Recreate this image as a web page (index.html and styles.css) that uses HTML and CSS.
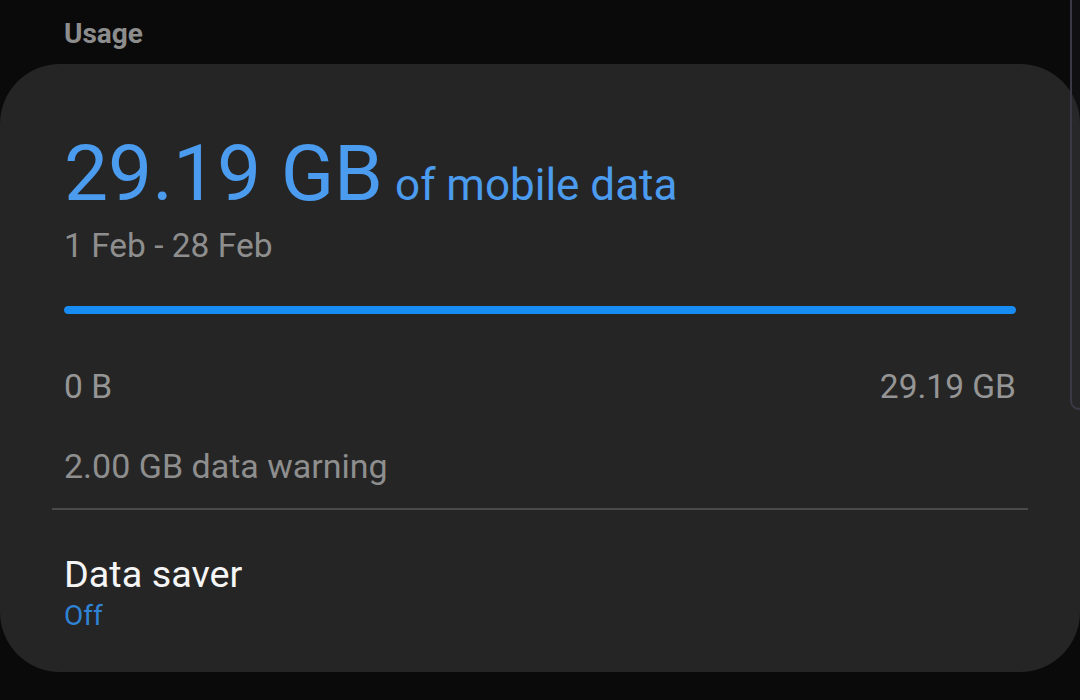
FILE: index.html
```html
<!DOCTYPE html>
<html lang="en">
<head>
<meta charset="utf-8">
<title>Usage</title>
<link rel="stylesheet" href="styles.css">
</head>
<body>
<div class="screen">
  <h2 class="section-title">Usage</h2>
  <section class="card">
    <div class="total">
      <span class="total-value">29.19 GB</span>
      <span class="total-label">of mobile data</span>
    </div>
    <div class="period">1 Feb - 28 Feb</div>
    <div class="bar"><div class="bar-fill" style="width:100%"></div></div>
    <div class="scale">
      <span>0 B</span>
      <span>29.19 GB</span>
    </div>
    <div class="warning">2.00 GB data warning</div>
    <div class="divider"></div>
    <div class="setting">
      <div class="setting-title">Data saver</div>
      <div class="setting-value">Off</div>
    </div>
  </section>
  <div class="scroll-thumb"></div>
</div>
</body>
</html>
```

FILE: styles.css
```css
html, body {
  margin: 0;
  padding: 0;
  background: #0a0a0a;
}
body {
  width: 1080px;
  height: 700px;
  overflow: hidden;
  font-family: Roboto, "Noto Sans", "Liberation Sans", sans-serif;
}
.screen {
  position: relative;
  width: 1080px;
  height: 700px;
}
.section-title {
  margin: 0;
  padding: 16px 0 0 64px;
  height: 50px;
  box-sizing: border-box;
  font-size: 28px;
  line-height: 36px;
  font-weight: 700;
  color: #8d8d8d;
}
.card {
  background: #252525;
  border-radius: 60px;
  height: 608px;
  box-sizing: border-box;
  padding: 69px 64px 0 64px;
  margin-top: 14px;
  display: flex;
  flex-direction: column;
}
.total {
  display: flex;
  align-items: baseline;
  gap: 12px;
  height: 80px;
  line-height: 80px;
  color: #4b9bee;
}
.total-value {
  font-size: 78.5px;
}
.total-label {
  font-size: 44px;
}
.period {
  margin-top: 13px;
  font-size: 33.5px;
  line-height: 40px;
  color: #8e8e8e;
}
.bar {
  margin-top: 40px;
  height: 8px;
  border-radius: 4px;
  background: #3a3a3a;
  overflow: hidden;
}
.bar-fill {
  height: 100%;
  background: #178cf3;
  border-radius: 4px;
}
.scale {
  margin-top: 53px;
  display: flex;
  justify-content: space-between;
  font-size: 33.5px;
  line-height: 40px;
  color: #959595;
}
.warning {
  margin-top: 39px;
  font-size: 34px;
  line-height: 40px;
  color: #8e8e8e;
}
.divider {
  margin: 22px -12px 0 -12px;
  height: 2px;
  background: #4a4a4a;
}
.setting {
  margin-top: 43px;
  display: flex;
  flex-direction: column;
  gap: 5px;
}
.setting-title {
  font-size: 37.8px;
  line-height: 42px;
  color: #f5f5f5;
}
.setting-value {
  font-size: 28px;
  line-height: 32px;
  color: #2f82d4;
}
.scroll-thumb {
  position: absolute;
  right: -8px;
  top: -20px;
  width: 18px;
  height: 430px;
  box-sizing: border-box;
  border: 2px solid #3a3946;
  border-radius: 12px;
  background: rgba(60, 60, 80, 0.12);
}
```
